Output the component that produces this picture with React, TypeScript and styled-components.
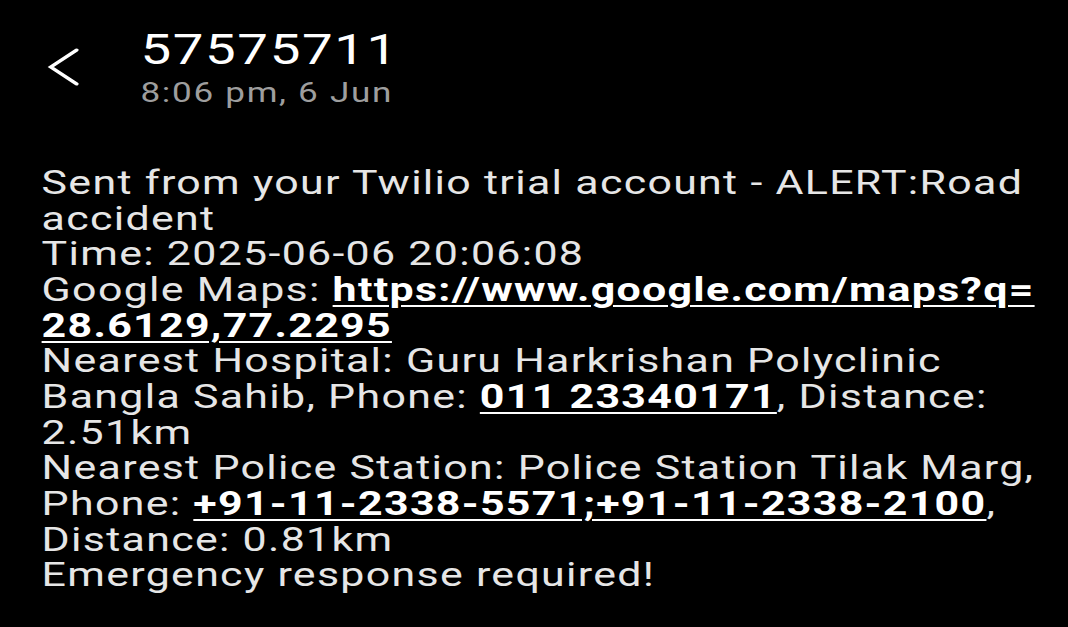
import React from "react";
import styled, { createGlobalStyle } from "styled-components";

const Global = createGlobalStyle`
  html, body { margin: 0; padding: 0; background: #000; }
  body { width: 1068px; height: 627px; overflow: hidden; font-family: Roboto, "Noto Sans", sans-serif; }
`;

const Screen = styled.div`
  width: 1068px;
  height: 627px;
  background: #000;
  overflow: hidden;
`;

const Stretch = styled.div`
  transform: scaleX(1.3);
  transform-origin: 0 0;
  width: 822px;
`;

const Header = styled.header`
  display: flex;
  align-items: flex-start;
  padding: 30px 0 0 35px;
  height: 132px;
  box-sizing: border-box;
`;

const Back = styled.button`
  background: none;
  border: 0;
  padding: 0;
  margin: 17px 0 0 0;
  width: 40px;
  height: 40px;
  color: #fff;
  display: flex;
`;

const Titles = styled.div`
  display: flex;
  flex-direction: column;
  margin-left: 33px;
`;

const Number = styled.div`
  font-size: 42px;
  line-height: 40px;
  letter-spacing: 1.25px;
  color: #fff;
`;

const When = styled.div`
  font-size: 27px;
  line-height: 36px;
  margin-top: 5px;
  letter-spacing: 1.3px;
  color: #9e9e9e;
`;

const Body = styled.div`
  padding: 33px 0 0 32px;
  display: flex;
  flex-direction: column;
`;

const Line = styled.div`
  font-size: 33px;
  line-height: 35.65px;
  letter-spacing: 1px;
  color: #e6e6e6;
  white-space: nowrap;
`;

const Link = styled.span`
  color: #fff;
  font-weight: 700;
  text-decoration: underline;
  text-decoration-thickness: 2px;
  text-underline-offset: 4px;
`;

export default function App() {
  return (
    <Screen>
      <Global />
      <Stretch>
        <Header>
          <Back aria-label="Back">
            <svg width="30" height="40" viewBox="0 0 30 40" fill="none" stroke="#fff" strokeWidth="3" strokeLinecap="round">
              <path d="M24 3 L4 20 L24 37" />
            </svg>
          </Back>
          <Titles>
            <Number>57575711</Number>
            <When>8:06 pm, 6 Jun</When>
          </Titles>
        </Header>
        <Body>
          <Line>Sent from your Twilio trial account - ALERT:Road</Line>
          <Line>accident</Line>
          <Line>Time: 2025-06-06 20:06:08</Line>
          <Line>Google Maps: <Link>https://www.google.com/maps?q=</Link></Line>
          <Line><Link>28.6129,77.2295</Link></Line>
          <Line>Nearest Hospital: Guru Harkrishan Polyclinic</Line>
          <Line>Bangla Sahib, Phone: <Link>011 23340171</Link>, Distance:</Line>
          <Line>2.51km</Line>
          <Line>Nearest Police Station: Police Station Tilak Marg,</Line>
          <Line>Phone: <Link>+91-11-2338-5571;+91-11-2338-2100</Link>,</Line>
          <Line>Distance: 0.81km</Line>
          <Line>Emergency response required!</Line>
        </Body>
      </Stretch>
    </Screen>
  );
}
